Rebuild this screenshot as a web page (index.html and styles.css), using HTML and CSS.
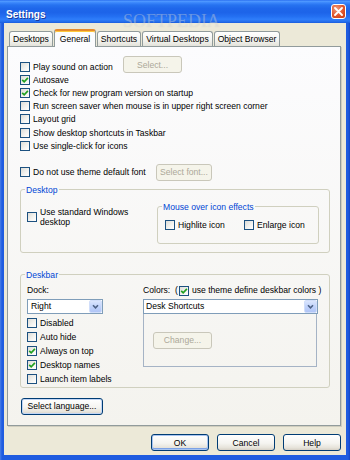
FILE: index.html
```html
<!DOCTYPE html>
<html lang="en">
<head>
  <meta charset="utf-8">
  <title>Settings</title>
  <link rel="stylesheet" href="styles.css">
</head>
<body>
<div class="window">
  <header class="title-bar">
    <span class="title">Settings</span>
    <button class="close" aria-label="Close">
      <svg width="9" height="9" viewBox="0 0 9 9"><path d="M1 1L8 8M8 1L1 8" stroke="#fff" stroke-width="1.8" stroke-linecap="round"/></svg>
    </button>
  </header>
  <div class="watermark">SOFTPEDIA</div>

  <main class="client">
    <nav class="tabs">
      <span class="tab t-desktops">Desktops</span>
      <span class="tab t-general is-active">General</span>
      <span class="tab t-shortcuts">Shortcuts</span>
      <span class="tab t-virtual">Virtual Desktops</span>
      <span class="tab t-object">Object Browser</span>
    </nav>

    <section class="pane">
      <div class="opts">
        <div class="row">
          <label class="chk w-play"><span class="box"></span>Play sound on action</label>
          <button class="btn btn-select" disabled>Select...</button>
        </div>
        <div class="row"><label class="chk"><span class="box on"><svg viewBox="0 0 8 8"><path d="M1.2 3.8L3.2 5.8L6.9 1.9" fill="none" stroke="#21a121" stroke-width="1.7"/></svg></span>Autosave</label></div>
        <div class="row"><label class="chk"><span class="box on"><svg viewBox="0 0 8 8"><path d="M1.2 3.8L3.2 5.8L6.9 1.9" fill="none" stroke="#21a121" stroke-width="1.7"/></svg></span>Check for new program version on startup</label></div>
        <div class="row"><label class="chk"><span class="box"></span>Run screen saver when mouse is in upper right screen corner</label></div>
        <div class="row"><label class="chk"><span class="box"></span>Layout grid</label></div>
        <div class="row"><label class="chk"><span class="box"></span>Show desktop shortcuts in Taskbar</label></div>
        <div class="row"><label class="chk"><span class="box"></span>Use single-click for icons</label></div>
        <div class="row row-font">
          <label class="chk w-font"><span class="box"></span>Do not use theme default font</label>
          <button class="btn btn-font" disabled>Select font...</button>
        </div>
      </div>

      <fieldset class="group desktop">
        <legend>Desktop</legend>
        <div class="group-body">
          <label class="chk std"><span class="box"></span><span>Use standard Windows desktop</span></label>
          <fieldset class="group mouse">
            <legend>Mouse over icon effects</legend>
            <div class="group-body">
              <label class="chk w-highlite"><span class="box"></span>Highlite icon</label>
              <label class="chk"><span class="box"></span>Enlarge icon</label>
            </div>
          </fieldset>
        </div>
      </fieldset>

      <fieldset class="group deskbar">
        <legend>Deskbar</legend>
        <div class="group-body">
          <div class="dock-col">
            <div class="lbl">Dock:</div>
            <div class="select">
              <span class="val">Right</span>
              <span class="drop"><svg viewBox="0 0 11 11"><path d="M3 4.3L5.5 6.8L8 4.3" fill="none" stroke="#4d6185" stroke-width="1.6"/></svg></span>
            </div>
            <div class="dock-rows">
              <label class="chk"><span class="box"></span>Disabled</label>
              <label class="chk"><span class="box"></span>Auto hide</label>
              <label class="chk"><span class="box on"><svg viewBox="0 0 8 8"><path d="M1.2 3.8L3.2 5.8L6.9 1.9" fill="none" stroke="#21a121" stroke-width="1.7"/></svg></span>Always on top</label>
              <label class="chk"><span class="box on"><svg viewBox="0 0 8 8"><path d="M1.2 3.8L3.2 5.8L6.9 1.9" fill="none" stroke="#21a121" stroke-width="1.7"/></svg></span>Desktop names</label>
              <label class="chk"><span class="box"></span>Launch item labels</label>
            </div>
          </div>
          <div class="colors-col">
            <div class="lbl colors-line">
              <span class="colors-name">Colors:</span>
              <span>(</span>
              <label class="chk chk-inline"><span class="box on"><svg viewBox="0 0 8 8"><path d="M1.2 3.8L3.2 5.8L6.9 1.9" fill="none" stroke="#21a121" stroke-width="1.7"/></svg></span>use theme define deskbar colors )</label>
            </div>
            <div class="combo">
              <div class="select combo-field">
                <span class="val">Desk Shortcuts</span>
                <span class="drop"><svg viewBox="0 0 11 11"><path d="M3 4.3L5.5 6.8L8 4.3" fill="none" stroke="#4d6185" stroke-width="1.6"/></svg></span>
              </div>
              <div class="combo-list">
                <button class="btn btn-change" disabled>Change...</button>
              </div>
            </div>
          </div>
        </div>
      </fieldset>

      <button class="btn btn-lang">Select language...</button>
    </section>

    <footer class="actions">
      <button class="btn btn-act btn-default">OK</button>
      <button class="btn btn-act">Cancel</button>
      <button class="btn btn-act">Help</button>
    </footer>
  </main>
</div>
</body>
</html>
```

FILE: styles.css
```css
* {
  box-sizing: border-box;
}
html, body {
  margin: 0;
  padding: 0;
}
body {
  width: 350px;
  height: 460px;
  overflow: hidden;
  font-family: 'Liberation Sans', Arial, sans-serif;
  font-size: 8.6px;
  color: #000;
  background: #fff;
}
.window {
  position: relative;
  width: 350px;
  height: 460px;
  display: flex;
  flex-direction: column;
  background: linear-gradient(to right, #4a7fe6, #1f5ce0 2px, #1f5ce0 348px, #1345c4);
}

/* title bar */
.title-bar {
  height: 23px;
  flex: none;
  display: flex;
  align-items: center;
  justify-content: space-between;
  padding: 0 4px 0 6px;
  background: linear-gradient(#2a6ff0 0%, #4e98ff 6%, #3a86fb 12%, #2672f0 22%,
    #1e66ea 38%, #1d64e9 55%, #2470f2 72%, #2e7dfa 84%, #2873f0 92%, #1a5cdd 100%);
}
.title {
  margin-top: 5px;
  color: #fff;
  font-weight: bold;
  font-size: 10px;
  text-shadow: 1px 1px 0 #1a3a9c;
}
.close {
  width: 15px;
  height: 15px;
  padding: 0;
  border: 1px solid #fff;
  border-radius: 3px;
  background: radial-gradient(circle at 35% 30%, #f09a7c, #e0552c 55%, #c43c14);
  display: flex;
  align-items: center;
  justify-content: center;
}
.close svg {
  display: block;
}
.watermark {
  position: absolute;
  left: 123px;
  top: 11px;
  font-family: 'Liberation Serif', serif;
  font-size: 18px;
  color: rgba(255, 255, 255, .28);
  text-shadow: 0 0 1px rgba(120, 120, 120, .2);
  pointer-events: none;
  z-index: 2;
}

/* client area */
.client {
  flex: 1;
  margin: 0 4px 5px;
  background: #ece9d8;
  display: flex;
  flex-direction: column;
}
.tabs {
  height: 23px;
  flex: none;
  display: flex;
  align-items: flex-end;
  padding-left: 5px;
}
.tab {
  height: 15px;
  margin-right: 1px;
  border: 1px solid #919b9c;
  border-bottom: none;
  border-radius: 3px 3px 0 0;
  background: linear-gradient(#fff, #f3f3ef 60%, #e3e2da);
  display: flex;
  align-items: center;
  justify-content: center;
  white-space: nowrap;
}
.t-desktops { width: 44px; }
.t-general { width: 42px; }
.t-shortcuts { width: 44px; }
.t-virtual { width: 71px; }
.t-object { width: 66px; }
.tab.is-active {
  position: relative;
  z-index: 1;
  height: 18px;
  margin-bottom: -1px;
  padding-bottom: 1px;
  border-top: 2px solid #e68b2c;
  box-shadow: inset 0 1px 0 #ffc83c;
  background: #fcfcfe;
}

.pane {
  height: 380px;
  width: 334px;
  margin-left: 3px;
  flex: none;
  border: 1px solid #919b9c;
  box-shadow: 1px 1px 0 #d0cebf;
  background: linear-gradient(#fcfcfe, #f4f3ee);
  padding: 13px 10px 0 12px;
}

/* checkboxes */
.chk {
  display: flex;
  align-items: center;
  white-space: nowrap;
}
.box {
  width: 10px;
  height: 10px;
  flex: none;
  margin-right: 3px;
  border: 1px solid #1c5180;
  background: linear-gradient(135deg, #dcdcd7, #f4f4f1 60%, #fff);
  display: flex;
  align-items: center;
  justify-content: center;
}
.box svg {
  width: 8px;
  height: 8px;
  display: block;
}

.opts {
  display: flex;
  flex-direction: column;
}
.opts .row {
  height: 13.2px;
  display: flex;
  align-items: center;
}
.opts .row-font {
  margin-top: 13px;
}
.w-play { width: 103px; }
.w-font { width: 136px; }

/* buttons */
.btn {
  font: inherit;
  height: 17px;
  padding: 0;
  color: #000;
  border: 1px solid #003c74;
  border-radius: 3px;
  background: linear-gradient(#fff, #f5f4f0 55%, #e6e3da 85%, #d6d0c5);
  flex: none;
}
.btn:disabled {
  color: #aca899;
  border-color: #c9c7ba;
  background: #f5f4ea;
}
.btn-select {
  width: 59px;
  align-self: flex-start;
  margin-top: -4px;
}
.btn-font {
  width: 56px;
  margin-top: 1px;
}
.btn-change {
  width: 59px;
}
.btn-lang {
  display: block;
  width: 82px;
  margin-top: 10px;
  margin-left: 1px;
  box-shadow: inset 0 0 0 1px #c2d6f5;
}

/* group boxes */
.group {
  margin: 0;
  min-width: 0;
  border: 1px solid #d0d0bf;
  border-radius: 3px;
  padding: 0 6px;
}
.group legend {
  color: #0046d5;
  line-height: 10px;
  padding: 0 1px;
  margin-left: -2px;
}
.group-body {
  display: flex;
}

.desktop {
  margin-top: 6.4px;
  padding: 7px 6px 8px;
}
.std {
  width: 130px;
  margin-top: 5px;
  align-self: flex-start;
  white-space: normal;
  line-height: 10px;
}
.std span:last-child {
  width: 110px;
}
.mouse {
  width: 162px;
  padding: 8px 7px 13px;
}
.mouse legend {
  margin-left: -3px;
}
.w-highlite {
  width: 79px;
}

.deskbar {
  margin-top: 17px;
  padding: 5px 6px 1px;
}
.lbl {
  line-height: 10px;
  height: 10px;
}
.dock-col {
  width: 116px;
  flex: none;
}
.select {
  width: 76px;
  height: 15px;
  margin-top: 4px;
  border: 1px solid #7f9db9;
  background: #fff;
  display: flex;
  align-items: center;
}
.select .val {
  flex: 1;
  padding-left: 3px;
  white-space: nowrap;
}
.drop {
  width: 13px;
  height: 13px;
  border: 1px solid #d1defa;
  border-radius: 2px;
  background: linear-gradient(#dbe6fd, #c1d3fb 50%, #b0c5f6);
  display: flex;
  align-items: center;
  justify-content: center;
}
.drop svg {
  width: 11px;
  height: 11px;
  display: block;
}
.dock-rows {
  margin-top: 2.5px;
}
.dock-rows .chk {
  height: 13.9px;
}

.colors-col {
  flex: 1;
}
.colors-line {
  display: flex;
  align-items: center;
}
.colors-name {
  margin-right: 4.8px;
}
.chk-inline .box {
  margin-left: 1px;
  margin-top: 2px;
}
.combo {
  width: 175px;
  margin-top: 4px;
}
.combo-field {
  width: 100%;
  margin-top: 0;
}
.combo-field .val {
  padding-left: 2px;
}
.combo-list {
  height: 53px;
  border: 1px solid #a5b3c5;
  border-top: none;
  margin-right: 1px;
  padding: 18px 0 0 9px;
}

/* dialog buttons */
.actions {
  display: flex;
  justify-content: flex-end;
  gap: 8px;
  margin-top: 8px;
  padding-right: 5px;
}
.btn-act {
  width: 58px;
}
.btn-default {
  box-shadow: inset 0 0 0 1px #a8c4f0, inset 0 -1px 0 1px #7da2e6;
}
```
